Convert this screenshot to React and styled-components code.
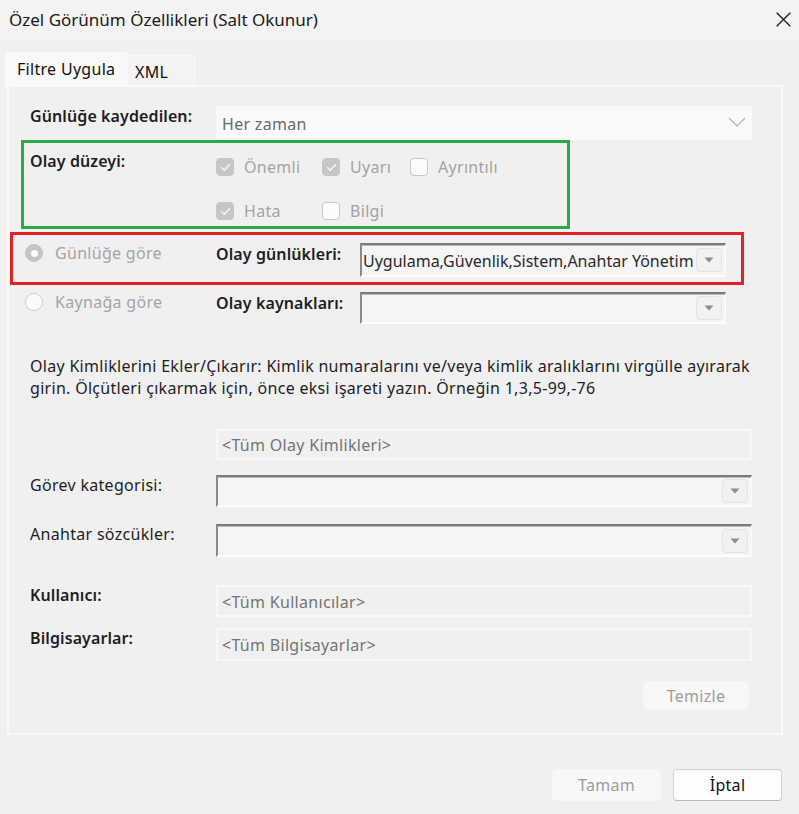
import React from 'react'
import styled, { createGlobalStyle } from 'styled-components'

const GlobalStyle = createGlobalStyle`
    html, body {
        margin: 0;
        padding: 0;
        background: #f0f0f0;
    }
    body {
        font-family: "Noto Sans", "Open Sans", sans-serif;
        font-size: 16px;
        letter-spacing: 0.3px;
        color: #1b1b1b;
    }
`;

const Dialog = styled.div`
    width: 799px;
    height: 814px;
    box-sizing: border-box;
    background: #f0f0f0;
    display: flex;
    flex-direction: column;
`;

const TitleBar = styled.div`
    height: 40px;
    flex-shrink: 0;
    background: #f3f3f3;
    display: flex;
    align-items: center;
    justify-content: space-between;
    padding: 0 8px 0 9px;
`;

const Title = styled.div`
    font-size: 17px;
    letter-spacing: 0;
    color: #1a1a1a;
    margin-top: -2px;
`;

const CloseIcon = styled.svg`
    width: 15px;
    height: 15px;
    margin-top: -1px;
`;

const Body = styled.div`
    padding: 12px 16px 0 7px;
    display: flex;
    flex-direction: column;
`;

const TabStrip = styled.div`
    display: flex;
    align-items: flex-end;
    height: 33px;
    margin-left: -2px;
`;

const Tab = styled.div`
    box-sizing: border-box;
    display: flex;
    align-items: center;
    color: #111;
    ${p => p.$active ? `
        height: 35px;
        width: 122px;
        margin-bottom: -2px;
        padding: 0 0 2px 12px;
        background: #f9f9f9;
        position: relative;
        z-index: 1;
    ` : `
        height: 30px;
        width: 68px;
        padding: 2px 0 0 7px;
        background: #f3f3f3;
        border: 1px solid #f8f8f8;
        border-bottom: none;
    `}
`;

const Panel = styled.div`
    box-sizing: border-box;
    width: 776px;
    height: 650px;
    border: 2px solid #f9f9f9;
    background: #f0f0f0;
    padding: 0 29px 0 1px;
    display: flex;
    flex-direction: column;
`;

const FieldRow = styled.div`
    display: grid;
    grid-template-columns: 186px 1fr;
    padding-left: 20px;
    margin-top: ${p => p.$top || 0}px;
    align-items: start;
`;

const Label = styled.div`
    line-height: 20px;
    font-weight: ${p => p.$strong ? 600 : 400};
    letter-spacing: ${p => p.$strong ? '0.1px' : '0.3px'};
    color: #1e1e1e;
    white-space: nowrap;
`;

const Select = styled.div`
    height: 34px;
    box-sizing: border-box;
    background: #f9f9f9;
    display: flex;
    align-items: center;
    justify-content: space-between;
    padding: 2px 6px 0 6px;
    color: #6b6b6b;
`;

const Chevron = styled.svg`
    width: 18px;
    height: 10px;
    margin-top: -4px;
`;

const TextBox = styled.div`
    height: ${p => p.$h || 32}px;
    box-sizing: border-box;
    border: 2px solid #f8f8f8;
    display: flex;
    align-items: center;
    padding: 1px 4px 0;
    color: #747474;
`;

const Combo = styled.div`
    height: ${p => p.$h || 32}px;
    box-sizing: border-box;
    background: #f5f5f5;
    border-top: 2px solid #7b7b7b;
    border-left: 2px solid #8a8a8a;
    border-bottom: 2px solid #fdfdfd;
    border-right: 1px solid #fbfbfb;
    box-shadow: inset 0 1px 0 #b9b9b9;
    display: flex;
    align-items: center;
    padding: 0 3px 0 1px;
    overflow: hidden;
`;

const ComboText = styled.div`
    flex: 1;
    min-width: 0;
    white-space: nowrap;
    overflow: hidden;
    color: #2a2a2a;
    letter-spacing: 0;
    padding-top: 1px;
`;

const DropButton = styled.div`
    width: 26px;
    height: 24px;
    flex-shrink: 0;
    margin-left: auto;
    box-sizing: border-box;
    border: 1px solid #e4e4e4;
    border-radius: 4px;
    background: #f1f1f1;
    display: flex;
    align-items: center;
    justify-content: center;
`;

const LevelBox = styled.div`
    box-sizing: border-box;
    width: 549px;
    height: 89px;
    margin-left: 11px;
    border: 3px solid #2aa84a;
    display: grid;
    grid-template-columns: 186px 1fr;
    padding-left: 6px;
`;

const LevelLabel = styled(Label)`
    margin-top: 8px;
`;

const LevelGrid = styled.div`
    display: grid;
    grid-template-columns: 106px 88px auto;
    grid-auto-rows: 22px;
    row-gap: 22px;
    padding-top: 13px;
`;

const CheckItem = styled.div`
    display: flex;
    align-items: center;
    gap: 10px;
    color: #a3a3a3;
`;

const Box = styled.span`
    width: 18px;
    height: 18px;
    box-sizing: border-box;
    border-radius: 4px;
    display: flex;
    align-items: center;
    justify-content: center;
    background: ${p => p.$checked ? '#c6c6c6' : '#fbfbfb'};
    border: 1px solid ${p => p.$checked ? '#c6c6c6' : '#c8c8c8'};
`;

const SourceRow = styled.div`
    display: grid;
    grid-template-columns: 191px 144px 366px;
    align-items: start;
    margin-top: ${p => p.$top || 0}px;
    padding-left: 15px;
`;

const MarkedRow = styled(SourceRow)`
    box-sizing: border-box;
    width: 734px;
    height: 53px;
    border: 3px solid #e02125;
    padding: 8px 0 0 12px;
`;

const RadioItem = styled.div`
    display: flex;
    align-items: center;
    gap: 12px;
    color: #a4a4a4;
    line-height: 20px;
`;

const Radio = styled.span`
    width: 18px;
    height: 18px;
    box-sizing: border-box;
    border-radius: 50%;
    display: flex;
    align-items: center;
    justify-content: center;
    background: ${p => p.$checked ? '#c4c4c4' : '#fbfbfb'};
    border: 1px solid ${p => p.$checked ? '#c4c4c4' : '#cdcdcd'};

    &::after {
        content: '';
        display: ${p => p.$checked ? 'block' : 'none'};
        width: 7px;
        height: 7px;
        border-radius: 50%;
        background: #fbfbfb;
    }
`;

const RadioLabel = styled(Label)`
    margin-top: 1px;
`;

const Hint = styled.p`
    margin: 31px 0 0 20px;
    line-height: 22px;
    color: #1e1e1e;
    white-space: nowrap;
`;

const ButtonRow = styled.div`
    display: flex;
    justify-content: flex-end;
    gap: 12px;
    margin-top: ${p => p.$top || 0}px;
    margin-right: ${p => p.$right || 0}px;
`;

const Button = styled.div`
    box-sizing: border-box;
    width: ${p => p.$w || 109}px;
    height: ${p => p.$h || 32}px;
    border-radius: 4px;
    display: flex;
    align-items: center;
    justify-content: center;
    ${p => p.$primary ? `
        background: #fdfdfd;
        border: 1px solid #d2d2d2;
        border-bottom-color: #b8b8b8;
        color: #111;
    ` : `
        background: #f8f8f8;
        border: 1px solid #f6f6f6;
        color: #9d9d9d;
    `}
`;

const Tick = () => (
    <svg width="11" height="9" viewBox="0 0 11 9">
        <path d="M1.5 4.6 L4.2 7.2 L9.5 1.8" fill="none" stroke="#fafafa" strokeWidth="1.3" strokeLinecap="round" strokeLinejoin="round" />
    </svg>
);

const Check = ({ checked, children }) => (
    <CheckItem>
        <Box $checked={checked}>{checked && <Tick />}</Box>
        {children}
    </CheckItem>
);

const ComboBox = ({ h, children }) => (
    <Combo $h={h}>
        <ComboText>{children}</ComboText>
        <DropButton>
            <svg width="10" height="6" viewBox="0 0 10 6">
                <path d="M0.5 0.5 H9.5 L5 5.5 Z" fill="#8c8c8c" />
            </svg>
        </DropButton>
    </Combo>
);

const levels = [
    { name: 'Önemli', checked: true },
    { name: 'Uyarı', checked: true },
    { name: 'Ayrıntılı', checked: false },
    { name: 'Hata', checked: true },
    { name: 'Bilgi', checked: false },
];

const App = () => {
    return (
        <Dialog>
            <GlobalStyle />
            <TitleBar>
                <Title>Özel Görünüm Özellikleri (Salt Okunur)</Title>
                <CloseIcon viewBox="0 0 15 15">
                    <path d="M0.7 0.7 L14.3 14.3 M14.3 0.7 L0.7 14.3" stroke="#1a1a1a" strokeWidth="1.3" />
                </CloseIcon>
            </TitleBar>
            <Body>
                <TabStrip>
                    <Tab $active>Filtre Uygula</Tab>
                    <Tab>XML</Tab>
                </TabStrip>
                <Panel>
                    <FieldRow $top={19}>
                        <Label $strong>Günlüğe kaydedilen:</Label>
                        <Select>
                            Her zaman
                            <Chevron viewBox="0 0 18 10">
                                <path d="M1 1 L9 9 L17 1" fill="none" stroke="#b4b4b4" strokeWidth="1.2" />
                            </Chevron>
                        </Select>
                    </FieldRow>

                    <LevelBox>
                        <LevelLabel $strong>Olay düzeyi:</LevelLabel>
                        <LevelGrid>
                            {levels.map(l => (
                                <Check key={l.name} checked={l.checked}>{l.name}</Check>
                            ))}
                        </LevelGrid>
                    </LevelBox>

                    <MarkedRow $top={3}>
                        <RadioItem>
                            <Radio $checked />
                            Günlüğe göre
                        </RadioItem>
                        <RadioLabel $strong>Olay günlükleri:</RadioLabel>
                        <ComboBox h={34}>Uygulama,Güvenlik,Sistem,Anahtar Yönetim</ComboBox>
                    </MarkedRow>

                    <SourceRow $top={7}>
                        <RadioItem>
                            <Radio />
                            Kaynağa göre
                        </RadioItem>
                        <RadioLabel $strong>Olay kaynakları:</RadioLabel>
                        <ComboBox h={32} />
                    </SourceRow>

                    <Hint>
                        Olay Kimliklerini Ekler/Çıkarır: Kimlik numaralarını ve/veya kimlik aralıklarını virgülle ayırarak<br />
                        girin. Ölçütleri çıkarmak için, önce eksi işareti yazın. Örneğin 1,3,5-99,-76
                    </Hint>

                    <FieldRow $top={30}>
                        <span />
                        <TextBox $h={31}>&lt;Tüm Olay Kimlikleri&gt;</TextBox>
                    </FieldRow>

                    <FieldRow $top={15}>
                        <Label>Görev kategorisi:</Label>
                        <ComboBox h={32} />
                    </FieldRow>

                    <FieldRow $top={17}>
                        <Label>Anahtar sözcükler:</Label>
                        <ComboBox h={33} />
                    </FieldRow>

                    <FieldRow $top={28}>
                        <Label $strong>Kullanıcı:</Label>
                        <TextBox>&lt;Tüm Kullanıcılar&gt;</TextBox>
                    </FieldRow>

                    <FieldRow $top={11}>
                        <Label $strong>Bilgisayarlar:</Label>
                        <TextBox $h={33}>&lt;Tüm Bilgisayarlar&gt;</TextBox>
                    </FieldRow>

                    <ButtonRow $top={20} $right={3}>
                        <Button $w={106} $h={29}>Temizle</Button>
                    </ButtonRow>
                </Panel>

                <ButtonRow $top={34} $right={1}>
                    <Button>Tamam</Button>
                    <Button $primary>İptal</Button>
                </ButtonRow>
            </Body>
        </Dialog>
    )
}

export default App
